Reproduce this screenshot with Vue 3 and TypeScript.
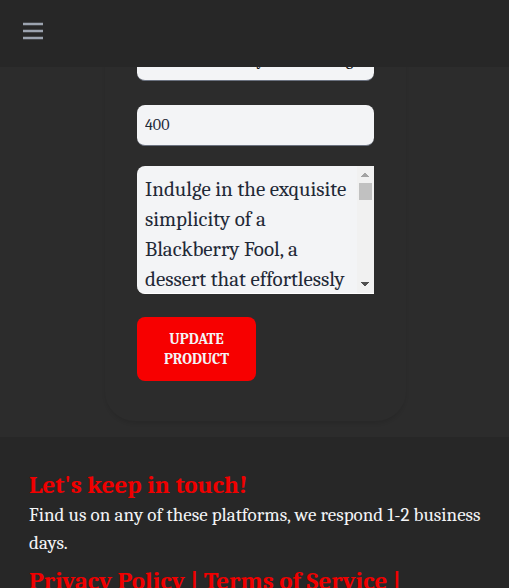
<script setup lang="ts">
import { ref } from 'vue'

const productName = ref('Classic Blackberry Fool Pudding')
const price = ref('400')
const description = ref(
  'Indulge in the exquisite simplicity of a Blackberry Fool, a dessert that effortlessly combines fresh berries and cream.'
)
const menuOpen = ref(false)
</script>

<template>
  <div class="page">
    <header class="navbar">
      <button class="menu" type="button" aria-label="Menu" :aria-expanded="menuOpen" @click="menuOpen = !menuOpen">
        <svg viewBox="0 0 28 28" width="28" height="28" fill="none" stroke="currentColor" stroke-width="2.4">
          <path d="M4 7h20M4 14h20M4 21h20" />
        </svg>
      </button>
    </header>

    <main class="content">
      <form class="card" @submit.prevent>
        <input v-model="productName" class="field name" type="text" aria-label="Product name" />
        <input v-model="price" class="field" type="text" inputmode="numeric" aria-label="Price" />
        <div class="area">
          <textarea v-model="description" class="description" aria-label="Description"></textarea>
          <div class="scrollbar" aria-hidden="true">
            <svg class="arrow up" viewBox="0 0 17 17" width="17" height="17"><path d="M4 11h8v-1h-1V9h-1V8H9V7H7v1H6v1H5v1H4z" /></svg>
            <div class="thumb"></div>
            <svg class="arrow down" viewBox="0 0 17 17" width="17" height="17"><path d="M4 6h8v1h-1v1h-1v1H9v1H7V9H6V8H5V7H4z" /></svg>
          </div>
        </div>
        <button class="submit" type="submit">Update Product</button>
      </form>
    </main>

    <footer class="footer">
      <h4 class="heading">Let's keep in touch!</h4>
      <p class="note">Find us on any of these platforms, we respond 1-2 business days.</p>
      <nav class="heading legal">
        <a href="#privacy">Privacy Policy</a> | <a href="#terms">Terms of Service</a> |
      </nav>
    </footer>
  </div>
</template>

<style>
body {
  margin: 0;
  background: #272727;
}
</style>

<style scoped>
.page,
.page * {
  box-sizing: border-box;
}
.page {
  height: 100vh;
  overflow: hidden;
  background: #2c2c2c;
  font-family: Cambria, "DejaVu Serif Condensed", "DejaVu Serif", serif;
}
.navbar {
  position: relative;
  z-index: 1;
  display: flex;
  align-items: center;
  padding: 17px 19px 22px;
  background: #272727;
}
.menu {
  display: flex;
  padding: 0;
  border: 0;
  background: none;
  color: #9ca3af;
}
.content {
  padding: 0 14px 16px 16px;
}
.card {
  display: flex;
  flex-direction: column;
  align-items: flex-start;
  max-width: 301px;
  margin: -27px auto 0;
  padding: 0 32px 40px;
  border-radius: 0 0 30px 30px;
  box-shadow: 0 3px 4px -1px rgba(0, 0, 0, 0.12);
}
.field {
  width: 100%;
  height: 41px;
  margin: 0 0 24px;
  padding: 8px;
  border: 0;
  border-bottom: 1px solid #6b7280;
  border-radius: 8px;
  background: #f3f4f6;
  color: #1f2937;
  font-family: inherit;
  font-size: 16px;
}
.name {
  color: #111;
}
.field + .area {
  margin-top: -4px;
}
.area {
  display: flex;
  width: 100%;
  height: 128px;
  border-bottom: 1px solid #fff;
  border-radius: 8px 0 0 8px;
  background: #f3f4f6;
  overflow: hidden;
}
.description {
  flex: 1;
  min-width: 0;
  padding: 8px;
  padding-right: 0;
  border: 0;
  background: transparent;
  color: #1f2937;
  font-family: inherit;
  font-size: 21px;
  line-height: 30px;
  resize: none;
  overflow: hidden;
}
.scrollbar {
  display: flex;
  flex-direction: column;
  align-items: center;
  width: 17px;
  background: #f1f1f1;
}
.thumb {
  width: 13px;
  height: 17px;
  background: #c1c1c1;
}
.arrow {
  flex: none;
}
.up {
  fill: #a3a3a3;
}
.down {
  margin-top: auto;
  fill: #505050;
}
.submit {
  width: 119px;
  margin-top: 23px;
  padding: 12px 24px;
  border: 0;
  border-radius: 8px;
  background: #f70000;
  color: #f3f4f6;
  font-family: inherit;
  font-size: 15px;
  font-weight: 700;
  line-height: 20px;
  text-transform: uppercase;
}
.footer {
  padding: 32px 24px 32px 29px;
  background: #272727;
}
.heading {
  margin: 0;
  color: #f00000;
  font-size: 25px;
  font-weight: 700;
  line-height: 32px;
}
.note {
  margin: 0 0 8px;
  color: #f3f4f6;
  font-size: 19px;
  line-height: 28px;
}
.legal a {
  color: inherit;
  text-decoration: none;
}
</style>
